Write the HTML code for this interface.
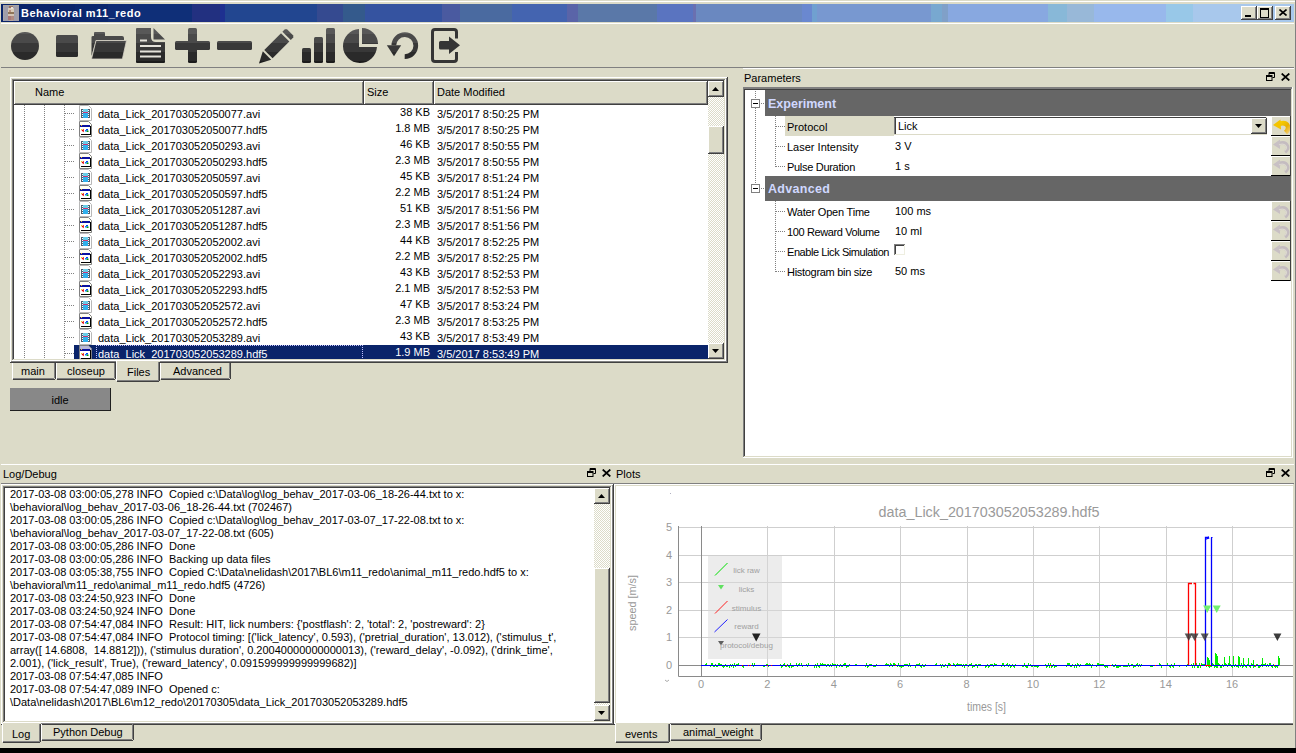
<!DOCTYPE html>
<html><head><meta charset="utf-8"><style>
html,body{margin:0;padding:0;}
body{width:1296px;height:753px;overflow:hidden;position:relative;background:#dcdbc8;font-family:"Liberation Sans",sans-serif;font-size:11px;}
body div, body svg{position:absolute;}
.t{white-space:pre;line-height:13px;color:#000;}
svg *{position:static}
</style></head><body>
<div style="left:0px;top:1px;width:1295px;height:1px;background:#fff;"></div><div style="left:1295px;top:0px;width:1px;height:748px;background:#808080;"></div><div style="left:0px;top:748px;width:1296px;height:5px;background:#000;"></div><div style="left:1px;top:4px;width:1293px;height:18px;background:linear-gradient(90deg,#0a246a 0px 74px,#0b276e 74px 107px,#0e2b75 107px 139px,#0f2f78 139px 191px,#223080 191px 219px,#1e3090 219px 224px,#224690 224px 316px,#354a90 316px 342px,#345a8c 342px 364px,#3553a0 364px 441px,#4a5aa0 441px 459px,#4a6aa0 459px 511px,#4464b0 511px 566px,#5a64a8 566px 577px,#5a78a8 577px 656px,#5a74c0 656px 692px,#6a70b0 692px 695px,#6a88c0 695px 801px,#6a88d0 801px 811px,#70a0d0 811px 816px,#7898d0 816px 930px,#78a8d0 930px 941px,#80a0c8 941px 947px,#88a8e0 947px 1047px,#88b8d8 1047px 1066px,#98b8d8 1066px 1093px,#98b8ec 1093px 1165px,#98c8e8 1165px 1192px,#a8c8ec 1192px 1293px);"></div><svg style="left:3px;top:5px" width="16" height="16" viewBox="0 0 16 16" shape-rendering="crispEdges"><rect width="16" height="16" fill="#a09eaa"/><rect x="0" y="0" width="16" height="1" fill="#aaa69e"/><rect x="0" y="0" width="1" height="16" fill="#a8a6a8"/><rect x="6" y="1" width="4" height="2" fill="#9a7060"/><rect x="5" y="3" width="6" height="5" fill="#d8cbb8"/><rect x="8" y="2" width="2" height="2" fill="#ece4d8"/><rect x="6" y="5" width="2" height="2" fill="#b89080"/><rect x="5" y="7" width="6" height="2" fill="#8e7458"/><rect x="5" y="9" width="6" height="2" fill="#d4c4b4"/><rect x="5" y="11" width="3" height="4" fill="#a87878"/><rect x="8" y="11" width="3" height="4" fill="#b08a80"/><rect x="6" y="15" width="4" height="1" fill="#b8a8a0"/></svg><div class="t" style="left:21px;top:7px;color:#fff;font-weight:bold;letter-spacing:0.5px">Behavioral m11_redo</div><div style="left:1241px;top:6px;width:16px;height:14px;background:#404040;"></div><div style="left:1241px;top:6px;width:15px;height:13px;background:#fff;"></div><div style="left:1242px;top:7px;width:14px;height:12px;background:#808080;"></div><div style="left:1242px;top:7px;width:13px;height:11px;background:#dcdbc8;"></div><div style="left:1245px;top:15px;width:6px;height:2px;background:#000;"></div><div style="left:1257px;top:6px;width:16px;height:14px;background:#404040;"></div><div style="left:1257px;top:6px;width:15px;height:13px;background:#fff;"></div><div style="left:1258px;top:7px;width:14px;height:12px;background:#808080;"></div><div style="left:1258px;top:7px;width:13px;height:11px;background:#dcdbc8;"></div><div style="left:1260px;top:8px;width:7px;height:7px;border:1px solid #000;border-top-width:2px"></div><div style="left:1275px;top:6px;width:16px;height:14px;background:#404040;"></div><div style="left:1275px;top:6px;width:15px;height:13px;background:#fff;"></div><div style="left:1276px;top:7px;width:14px;height:12px;background:#808080;"></div><div style="left:1276px;top:7px;width:13px;height:11px;background:#dcdbc8;"></div><svg style="left:1279px;top:9px" width="8" height="7" viewBox="0 0 8 7"><path d="M0.5 0.5 L7.5 6.5 M7.5 0.5 L0.5 6.5" stroke="#000" stroke-width="1.6"/></svg><div style="left:1px;top:23px;width:1293px;height:1px;background:#fff;"></div><div style="left:1px;top:67px;width:1293px;height:1px;background:#808080;"></div><div style="left:743px;top:68px;width:551px;height:1px;background:#fff;"></div><svg style="left:0px;top:0px" width="470" height="67" viewBox="0 0 470 67">
<defs><linearGradient id="tg" gradientUnits="userSpaceOnUse" x1="0" y1="27" x2="0" y2="64">
<stop offset="0" stop-color="#585858"/><stop offset="0.19" stop-color="#585858"/>
<stop offset="0.19" stop-color="#4a4a4a"/><stop offset="0.43" stop-color="#4a4a4a"/>
<stop offset="0.43" stop-color="#383838"/><stop offset="0.68" stop-color="#383838"/>
<stop offset="0.68" stop-color="#2a2a2a"/><stop offset="0.92" stop-color="#2a2a2a"/>
<stop offset="0.92" stop-color="#1c1c1c"/><stop offset="1" stop-color="#1c1c1c"/>
</linearGradient></defs>
<circle cx="25" cy="46" r="14" fill="url(#tg)"/>
<rect x="56" y="35" width="22" height="22" rx="1.5" fill="url(#tg)"/>
<path d="M95 32 H104 Q105 32 105 33 V36 H122 Q124 36 124 38 V40 H96 L91.5 56 V37 Q91.5 36 93 36 H94 V33 Q94 32 95 32 Z" fill="url(#tg)"/>
<path d="M96 40.5 H126.5 L122.5 58.5 Q122 59 121 59 H91.5 Z" fill="url(#tg)" stroke="#d8d4c8" stroke-width="0.8"/>
<path d="M137 28 H151 V37 Q151 42 156 42 H165 V62 Q165 63 164 63 H137 Q136 63 136 62 V29 Q136 28 137 28 Z" fill="url(#tg)"/>
<path d="M153.5 28 L165 39.5 H153.5 Z" fill="url(#tg)"/>
<rect x="140" y="39.5" width="7" height="2" fill="#e4e2da"/>
<rect x="140" y="45" width="21" height="2" fill="#e4e2da"/>
<rect x="140" y="50.5" width="21" height="2" fill="#e4e2da"/>
<rect x="140" y="55.5" width="21" height="2" fill="#e4e2da"/>
<rect x="175" y="41" width="35" height="9" rx="1.5" fill="url(#tg)"/>
<rect x="188" y="28" width="9" height="35" rx="1.5" fill="url(#tg)"/>
<rect x="217" y="41" width="35" height="9" rx="1.5" fill="url(#tg)"/>
<path d="M259.00 63.50 L262.82 51.34 L271.16 59.68 Z" fill="url(#tg)"/>
<path d="M264.23 49.92 L280.99 33.17 L289.33 41.51 L272.58 58.27 Z" fill="url(#tg)"/>
<path d="M282.41 31.75 L284.88 29.28 L287.00 29.28 L293.22 35.50 L293.22 37.62 L290.75 40.09 Z" fill="url(#tg)"/>
<rect x="302" y="48" width="9" height="15" rx="1.5" fill="url(#tg)"/>
<rect x="314" y="37" width="9" height="26" rx="1.5" fill="url(#tg)"/>
<rect x="326" y="28" width="9" height="35" rx="1.5" fill="url(#tg)"/>
<path d="M359 47 V29.03 A17 17 0 1 0 376.97 47 Z" fill="url(#tg)"/>
<path d="M362 44 V28 A16 16 0 0 1 378 44 Z" fill="url(#tg)"/>
<path d="M393.8 45.4 A11 11 0 1 1 404.7 56.6" fill="none" stroke="url(#tg)" stroke-width="4.7"/>
<path d="M386.8 45.3 H401.2 L394 56.2 Z" fill="url(#tg)"/>
<path d="M456.5 38.5 V32 Q456.5 29.5 454 29.5 H435 Q432.5 29.5 432.5 32 V59 Q432.5 61.5 435 61.5 H454 Q456.5 61.5 456.5 59 V52" fill="none" stroke="#353535" stroke-width="3"/>
<path d="M440.5 41 H449 V36.6 L460 45.3 L449 54 V49.5 H440.5 Q439 49.5 439 48 V42.5 Q439 41 440.5 41 Z" fill="#353535"/>
</svg><div style="left:10px;top:77px;width:718px;height:286px;background:#404040;"></div><div style="left:10px;top:77px;width:717px;height:285px;background:#fff;"></div><div style="left:11px;top:78px;width:716px;height:284px;background:#808080;"></div><div style="left:11px;top:78px;width:715px;height:283px;background:#dcdbc8;"></div><div style="left:12px;top:79px;width:714px;height:282px;background:#fff;"></div><div style="left:12px;top:79px;width:713px;height:281px;background:#808080;"></div><div style="left:13px;top:80px;width:712px;height:280px;background:#dcdbc8;"></div><div style="left:13px;top:80px;width:711px;height:279px;background:#404040;"></div><div style="left:14px;top:81px;width:710px;height:278px;background:#fff;"></div><div style="left:14px;top:81px;width:350px;height:24px;background:#404040;"></div><div style="left:14px;top:81px;width:349px;height:23px;background:#fff;"></div><div style="left:15px;top:82px;width:348px;height:22px;background:#808080;"></div><div style="left:15px;top:82px;width:347px;height:21px;background:#dcdbc8;"></div><div class="t" style="left:35px;top:86px;">Name</div><div style="left:364px;top:81px;width:70px;height:24px;background:#404040;"></div><div style="left:364px;top:81px;width:69px;height:23px;background:#fff;"></div><div style="left:365px;top:82px;width:68px;height:22px;background:#808080;"></div><div style="left:365px;top:82px;width:67px;height:21px;background:#dcdbc8;"></div><div class="t" style="left:367px;top:86px;">Size</div><div style="left:434px;top:81px;width:274px;height:24px;background:#404040;"></div><div style="left:434px;top:81px;width:273px;height:23px;background:#fff;"></div><div style="left:435px;top:82px;width:272px;height:22px;background:#808080;"></div><div style="left:435px;top:82px;width:271px;height:21px;background:#dcdbc8;"></div><div class="t" style="left:437px;top:86px;">Date Modified</div><div style="left:14px;top:105px;width:694px;height:254px;overflow:hidden"><div style="left:10px;top:0px;width:1px;height:254px;background:repeating-linear-gradient(180deg,#808080 0 1px,transparent 1px 2px)"></div><div style="left:30px;top:0px;width:1px;height:254px;background:repeating-linear-gradient(180deg,#808080 0 1px,transparent 1px 2px)"></div><div style="left:50px;top:0px;width:1px;height:254px;background:repeating-linear-gradient(180deg,#808080 0 1px,transparent 1px 2px)"></div><div style="left:51px;top:8px;width:10px;height:1px;background:repeating-linear-gradient(90deg,#808080 0 1px,transparent 1px 2px)"></div><svg style="left:65px;top:0px" width="14" height="16" viewBox="0 0 14 16"><path d="M0.5 0.5 H9.5 L12.5 3.5 V15.5 H0.5 Z" fill="#fff" stroke="#b8b8b8"/><rect x="2" y="4" width="9" height="9" fill="#4c5c6c"/><rect x="4" y="4" width="5" height="9" fill="#30b0ec"/><rect x="4" y="4" width="5" height="3" fill="#68cce8"/><rect x="4" y="7" width="5" height="1" fill="#c83878"/><rect x="3" y="5" width="1" height="1" fill="#fff"/><rect x="3" y="7" width="1" height="1" fill="#fff"/><rect x="3" y="9" width="1" height="1" fill="#fff"/><rect x="3" y="11" width="1" height="1" fill="#fff"/><rect x="9" y="5" width="1" height="1" fill="#fff"/><rect x="9" y="7" width="1" height="1" fill="#fff"/><rect x="9" y="9" width="1" height="1" fill="#fff"/><rect x="9" y="11" width="1" height="1" fill="#fff"/></svg><div class="t" style="left:84px;top:3px;color:#000">data_Lick_201703052050077.avi</div><div class="t" style="left:350px;top:1px;width:66px;text-align:right;color:#000">38 KB</div><div class="t" style="left:423px;top:3px;color:#000">3/5/2017 8:50:25 PM</div><div style="left:51px;top:24px;width:10px;height:1px;background:repeating-linear-gradient(90deg,#808080 0 1px,transparent 1px 2px)"></div><svg style="left:65px;top:16px" width="14" height="16" viewBox="0 0 14 16"><path d="M0.5 0.5 H9.5 L12.5 3.5 V15.5 H0.5 Z" fill="#fffff4" stroke="#808080"/><rect x="2" y="5" width="10" height="9" fill="#000"/><rect x="1" y="4" width="10" height="9" fill="#fff"/><rect x="1" y="4" width="10" height="2" fill="#0a10a0"/><rect x="2" y="4" width="1" height="1" fill="#f0c020"/><path d="M2.5 9.5 L4.8 7.8 V11.2 Z" fill="#e00000"/><rect x="2" y="8" width="1" height="1" fill="#f0e000"/><rect x="7" y="8" width="2" height="1.5" fill="#0040ff"/><rect x="7.5" y="9.5" width="2" height="1.5" fill="#00a000"/><rect x="6" y="9" width="1.5" height="1.5" fill="#0080ff"/></svg><div class="t" style="left:84px;top:19px;color:#000">data_Lick_201703052050077.hdf5</div><div class="t" style="left:350px;top:17px;width:66px;text-align:right;color:#000">1.8 MB</div><div class="t" style="left:423px;top:19px;color:#000">3/5/2017 8:50:25 PM</div><div style="left:51px;top:40px;width:10px;height:1px;background:repeating-linear-gradient(90deg,#808080 0 1px,transparent 1px 2px)"></div><svg style="left:65px;top:32px" width="14" height="16" viewBox="0 0 14 16"><path d="M0.5 0.5 H9.5 L12.5 3.5 V15.5 H0.5 Z" fill="#fff" stroke="#b8b8b8"/><rect x="2" y="4" width="9" height="9" fill="#4c5c6c"/><rect x="4" y="4" width="5" height="9" fill="#30b0ec"/><rect x="4" y="4" width="5" height="3" fill="#68cce8"/><rect x="4" y="7" width="5" height="1" fill="#c83878"/><rect x="3" y="5" width="1" height="1" fill="#fff"/><rect x="3" y="7" width="1" height="1" fill="#fff"/><rect x="3" y="9" width="1" height="1" fill="#fff"/><rect x="3" y="11" width="1" height="1" fill="#fff"/><rect x="9" y="5" width="1" height="1" fill="#fff"/><rect x="9" y="7" width="1" height="1" fill="#fff"/><rect x="9" y="9" width="1" height="1" fill="#fff"/><rect x="9" y="11" width="1" height="1" fill="#fff"/></svg><div class="t" style="left:84px;top:35px;color:#000">data_Lick_201703052050293.avi</div><div class="t" style="left:350px;top:33px;width:66px;text-align:right;color:#000">46 KB</div><div class="t" style="left:423px;top:35px;color:#000">3/5/2017 8:50:55 PM</div><div style="left:51px;top:56px;width:10px;height:1px;background:repeating-linear-gradient(90deg,#808080 0 1px,transparent 1px 2px)"></div><svg style="left:65px;top:48px" width="14" height="16" viewBox="0 0 14 16"><path d="M0.5 0.5 H9.5 L12.5 3.5 V15.5 H0.5 Z" fill="#fffff4" stroke="#808080"/><rect x="2" y="5" width="10" height="9" fill="#000"/><rect x="1" y="4" width="10" height="9" fill="#fff"/><rect x="1" y="4" width="10" height="2" fill="#0a10a0"/><rect x="2" y="4" width="1" height="1" fill="#f0c020"/><path d="M2.5 9.5 L4.8 7.8 V11.2 Z" fill="#e00000"/><rect x="2" y="8" width="1" height="1" fill="#f0e000"/><rect x="7" y="8" width="2" height="1.5" fill="#0040ff"/><rect x="7.5" y="9.5" width="2" height="1.5" fill="#00a000"/><rect x="6" y="9" width="1.5" height="1.5" fill="#0080ff"/></svg><div class="t" style="left:84px;top:51px;color:#000">data_Lick_201703052050293.hdf5</div><div class="t" style="left:350px;top:49px;width:66px;text-align:right;color:#000">2.3 MB</div><div class="t" style="left:423px;top:51px;color:#000">3/5/2017 8:50:55 PM</div><div style="left:51px;top:72px;width:10px;height:1px;background:repeating-linear-gradient(90deg,#808080 0 1px,transparent 1px 2px)"></div><svg style="left:65px;top:64px" width="14" height="16" viewBox="0 0 14 16"><path d="M0.5 0.5 H9.5 L12.5 3.5 V15.5 H0.5 Z" fill="#fff" stroke="#b8b8b8"/><rect x="2" y="4" width="9" height="9" fill="#4c5c6c"/><rect x="4" y="4" width="5" height="9" fill="#30b0ec"/><rect x="4" y="4" width="5" height="3" fill="#68cce8"/><rect x="4" y="7" width="5" height="1" fill="#c83878"/><rect x="3" y="5" width="1" height="1" fill="#fff"/><rect x="3" y="7" width="1" height="1" fill="#fff"/><rect x="3" y="9" width="1" height="1" fill="#fff"/><rect x="3" y="11" width="1" height="1" fill="#fff"/><rect x="9" y="5" width="1" height="1" fill="#fff"/><rect x="9" y="7" width="1" height="1" fill="#fff"/><rect x="9" y="9" width="1" height="1" fill="#fff"/><rect x="9" y="11" width="1" height="1" fill="#fff"/></svg><div class="t" style="left:84px;top:67px;color:#000">data_Lick_201703052050597.avi</div><div class="t" style="left:350px;top:65px;width:66px;text-align:right;color:#000">45 KB</div><div class="t" style="left:423px;top:67px;color:#000">3/5/2017 8:51:24 PM</div><div style="left:51px;top:88px;width:10px;height:1px;background:repeating-linear-gradient(90deg,#808080 0 1px,transparent 1px 2px)"></div><svg style="left:65px;top:80px" width="14" height="16" viewBox="0 0 14 16"><path d="M0.5 0.5 H9.5 L12.5 3.5 V15.5 H0.5 Z" fill="#fffff4" stroke="#808080"/><rect x="2" y="5" width="10" height="9" fill="#000"/><rect x="1" y="4" width="10" height="9" fill="#fff"/><rect x="1" y="4" width="10" height="2" fill="#0a10a0"/><rect x="2" y="4" width="1" height="1" fill="#f0c020"/><path d="M2.5 9.5 L4.8 7.8 V11.2 Z" fill="#e00000"/><rect x="2" y="8" width="1" height="1" fill="#f0e000"/><rect x="7" y="8" width="2" height="1.5" fill="#0040ff"/><rect x="7.5" y="9.5" width="2" height="1.5" fill="#00a000"/><rect x="6" y="9" width="1.5" height="1.5" fill="#0080ff"/></svg><div class="t" style="left:84px;top:83px;color:#000">data_Lick_201703052050597.hdf5</div><div class="t" style="left:350px;top:81px;width:66px;text-align:right;color:#000">2.2 MB</div><div class="t" style="left:423px;top:83px;color:#000">3/5/2017 8:51:24 PM</div><div style="left:51px;top:104px;width:10px;height:1px;background:repeating-linear-gradient(90deg,#808080 0 1px,transparent 1px 2px)"></div><svg style="left:65px;top:96px" width="14" height="16" viewBox="0 0 14 16"><path d="M0.5 0.5 H9.5 L12.5 3.5 V15.5 H0.5 Z" fill="#fff" stroke="#b8b8b8"/><rect x="2" y="4" width="9" height="9" fill="#4c5c6c"/><rect x="4" y="4" width="5" height="9" fill="#30b0ec"/><rect x="4" y="4" width="5" height="3" fill="#68cce8"/><rect x="4" y="7" width="5" height="1" fill="#c83878"/><rect x="3" y="5" width="1" height="1" fill="#fff"/><rect x="3" y="7" width="1" height="1" fill="#fff"/><rect x="3" y="9" width="1" height="1" fill="#fff"/><rect x="3" y="11" width="1" height="1" fill="#fff"/><rect x="9" y="5" width="1" height="1" fill="#fff"/><rect x="9" y="7" width="1" height="1" fill="#fff"/><rect x="9" y="9" width="1" height="1" fill="#fff"/><rect x="9" y="11" width="1" height="1" fill="#fff"/></svg><div class="t" style="left:84px;top:99px;color:#000">data_Lick_201703052051287.avi</div><div class="t" style="left:350px;top:97px;width:66px;text-align:right;color:#000">51 KB</div><div class="t" style="left:423px;top:99px;color:#000">3/5/2017 8:51:56 PM</div><div style="left:51px;top:120px;width:10px;height:1px;background:repeating-linear-gradient(90deg,#808080 0 1px,transparent 1px 2px)"></div><svg style="left:65px;top:112px" width="14" height="16" viewBox="0 0 14 16"><path d="M0.5 0.5 H9.5 L12.5 3.5 V15.5 H0.5 Z" fill="#fffff4" stroke="#808080"/><rect x="2" y="5" width="10" height="9" fill="#000"/><rect x="1" y="4" width="10" height="9" fill="#fff"/><rect x="1" y="4" width="10" height="2" fill="#0a10a0"/><rect x="2" y="4" width="1" height="1" fill="#f0c020"/><path d="M2.5 9.5 L4.8 7.8 V11.2 Z" fill="#e00000"/><rect x="2" y="8" width="1" height="1" fill="#f0e000"/><rect x="7" y="8" width="2" height="1.5" fill="#0040ff"/><rect x="7.5" y="9.5" width="2" height="1.5" fill="#00a000"/><rect x="6" y="9" width="1.5" height="1.5" fill="#0080ff"/></svg><div class="t" style="left:84px;top:115px;color:#000">data_Lick_201703052051287.hdf5</div><div class="t" style="left:350px;top:113px;width:66px;text-align:right;color:#000">2.3 MB</div><div class="t" style="left:423px;top:115px;color:#000">3/5/2017 8:51:56 PM</div><div style="left:51px;top:136px;width:10px;height:1px;background:repeating-linear-gradient(90deg,#808080 0 1px,transparent 1px 2px)"></div><svg style="left:65px;top:128px" width="14" height="16" viewBox="0 0 14 16"><path d="M0.5 0.5 H9.5 L12.5 3.5 V15.5 H0.5 Z" fill="#fff" stroke="#b8b8b8"/><rect x="2" y="4" width="9" height="9" fill="#4c5c6c"/><rect x="4" y="4" width="5" height="9" fill="#30b0ec"/><rect x="4" y="4" width="5" height="3" fill="#68cce8"/><rect x="4" y="7" width="5" height="1" fill="#c83878"/><rect x="3" y="5" width="1" height="1" fill="#fff"/><rect x="3" y="7" width="1" height="1" fill="#fff"/><rect x="3" y="9" width="1" height="1" fill="#fff"/><rect x="3" y="11" width="1" height="1" fill="#fff"/><rect x="9" y="5" width="1" height="1" fill="#fff"/><rect x="9" y="7" width="1" height="1" fill="#fff"/><rect x="9" y="9" width="1" height="1" fill="#fff"/><rect x="9" y="11" width="1" height="1" fill="#fff"/></svg><div class="t" style="left:84px;top:131px;color:#000">data_Lick_201703052052002.avi</div><div class="t" style="left:350px;top:129px;width:66px;text-align:right;color:#000">44 KB</div><div class="t" style="left:423px;top:131px;color:#000">3/5/2017 8:52:25 PM</div><div style="left:51px;top:152px;width:10px;height:1px;background:repeating-linear-gradient(90deg,#808080 0 1px,transparent 1px 2px)"></div><svg style="left:65px;top:144px" width="14" height="16" viewBox="0 0 14 16"><path d="M0.5 0.5 H9.5 L12.5 3.5 V15.5 H0.5 Z" fill="#fffff4" stroke="#808080"/><rect x="2" y="5" width="10" height="9" fill="#000"/><rect x="1" y="4" width="10" height="9" fill="#fff"/><rect x="1" y="4" width="10" height="2" fill="#0a10a0"/><rect x="2" y="4" width="1" height="1" fill="#f0c020"/><path d="M2.5 9.5 L4.8 7.8 V11.2 Z" fill="#e00000"/><rect x="2" y="8" width="1" height="1" fill="#f0e000"/><rect x="7" y="8" width="2" height="1.5" fill="#0040ff"/><rect x="7.5" y="9.5" width="2" height="1.5" fill="#00a000"/><rect x="6" y="9" width="1.5" height="1.5" fill="#0080ff"/></svg><div class="t" style="left:84px;top:147px;color:#000">data_Lick_201703052052002.hdf5</div><div class="t" style="left:350px;top:145px;width:66px;text-align:right;color:#000">2.2 MB</div><div class="t" style="left:423px;top:147px;color:#000">3/5/2017 8:52:25 PM</div><div style="left:51px;top:168px;width:10px;height:1px;background:repeating-linear-gradient(90deg,#808080 0 1px,transparent 1px 2px)"></div><svg style="left:65px;top:160px" width="14" height="16" viewBox="0 0 14 16"><path d="M0.5 0.5 H9.5 L12.5 3.5 V15.5 H0.5 Z" fill="#fff" stroke="#b8b8b8"/><rect x="2" y="4" width="9" height="9" fill="#4c5c6c"/><rect x="4" y="4" width="5" height="9" fill="#30b0ec"/><rect x="4" y="4" width="5" height="3" fill="#68cce8"/><rect x="4" y="7" width="5" height="1" fill="#c83878"/><rect x="3" y="5" width="1" height="1" fill="#fff"/><rect x="3" y="7" width="1" height="1" fill="#fff"/><rect x="3" y="9" width="1" height="1" fill="#fff"/><rect x="3" y="11" width="1" height="1" fill="#fff"/><rect x="9" y="5" width="1" height="1" fill="#fff"/><rect x="9" y="7" width="1" height="1" fill="#fff"/><rect x="9" y="9" width="1" height="1" fill="#fff"/><rect x="9" y="11" width="1" height="1" fill="#fff"/></svg><div class="t" style="left:84px;top:163px;color:#000">data_Lick_201703052052293.avi</div><div class="t" style="left:350px;top:161px;width:66px;text-align:right;color:#000">43 KB</div><div class="t" style="left:423px;top:163px;color:#000">3/5/2017 8:52:53 PM</div><div style="left:51px;top:184px;width:10px;height:1px;background:repeating-linear-gradient(90deg,#808080 0 1px,transparent 1px 2px)"></div><svg style="left:65px;top:176px" width="14" height="16" viewBox="0 0 14 16"><path d="M0.5 0.5 H9.5 L12.5 3.5 V15.5 H0.5 Z" fill="#fffff4" stroke="#808080"/><rect x="2" y="5" width="10" height="9" fill="#000"/><rect x="1" y="4" width="10" height="9" fill="#fff"/><rect x="1" y="4" width="10" height="2" fill="#0a10a0"/><rect x="2" y="4" width="1" height="1" fill="#f0c020"/><path d="M2.5 9.5 L4.8 7.8 V11.2 Z" fill="#e00000"/><rect x="2" y="8" width="1" height="1" fill="#f0e000"/><rect x="7" y="8" width="2" height="1.5" fill="#0040ff"/><rect x="7.5" y="9.5" width="2" height="1.5" fill="#00a000"/><rect x="6" y="9" width="1.5" height="1.5" fill="#0080ff"/></svg><div class="t" style="left:84px;top:179px;color:#000">data_Lick_201703052052293.hdf5</div><div class="t" style="left:350px;top:177px;width:66px;text-align:right;color:#000">2.1 MB</div><div class="t" style="left:423px;top:179px;color:#000">3/5/2017 8:52:53 PM</div><div style="left:51px;top:200px;width:10px;height:1px;background:repeating-linear-gradient(90deg,#808080 0 1px,transparent 1px 2px)"></div><svg style="left:65px;top:192px" width="14" height="16" viewBox="0 0 14 16"><path d="M0.5 0.5 H9.5 L12.5 3.5 V15.5 H0.5 Z" fill="#fff" stroke="#b8b8b8"/><rect x="2" y="4" width="9" height="9" fill="#4c5c6c"/><rect x="4" y="4" width="5" height="9" fill="#30b0ec"/><rect x="4" y="4" width="5" height="3" fill="#68cce8"/><rect x="4" y="7" width="5" height="1" fill="#c83878"/><rect x="3" y="5" width="1" height="1" fill="#fff"/><rect x="3" y="7" width="1" height="1" fill="#fff"/><rect x="3" y="9" width="1" height="1" fill="#fff"/><rect x="3" y="11" width="1" height="1" fill="#fff"/><rect x="9" y="5" width="1" height="1" fill="#fff"/><rect x="9" y="7" width="1" height="1" fill="#fff"/><rect x="9" y="9" width="1" height="1" fill="#fff"/><rect x="9" y="11" width="1" height="1" fill="#fff"/></svg><div class="t" style="left:84px;top:195px;color:#000">data_Lick_201703052052572.avi</div><div class="t" style="left:350px;top:193px;width:66px;text-align:right;color:#000">47 KB</div><div class="t" style="left:423px;top:195px;color:#000">3/5/2017 8:53:24 PM</div><div style="left:51px;top:216px;width:10px;height:1px;background:repeating-linear-gradient(90deg,#808080 0 1px,transparent 1px 2px)"></div><svg style="left:65px;top:208px" width="14" height="16" viewBox="0 0 14 16"><path d="M0.5 0.5 H9.5 L12.5 3.5 V15.5 H0.5 Z" fill="#fffff4" stroke="#808080"/><rect x="2" y="5" width="10" height="9" fill="#000"/><rect x="1" y="4" width="10" height="9" fill="#fff"/><rect x="1" y="4" width="10" height="2" fill="#0a10a0"/><rect x="2" y="4" width="1" height="1" fill="#f0c020"/><path d="M2.5 9.5 L4.8 7.8 V11.2 Z" fill="#e00000"/><rect x="2" y="8" width="1" height="1" fill="#f0e000"/><rect x="7" y="8" width="2" height="1.5" fill="#0040ff"/><rect x="7.5" y="9.5" width="2" height="1.5" fill="#00a000"/><rect x="6" y="9" width="1.5" height="1.5" fill="#0080ff"/></svg><div class="t" style="left:84px;top:211px;color:#000">data_Lick_201703052052572.hdf5</div><div class="t" style="left:350px;top:209px;width:66px;text-align:right;color:#000">2.3 MB</div><div class="t" style="left:423px;top:211px;color:#000">3/5/2017 8:53:25 PM</div><div style="left:51px;top:232px;width:10px;height:1px;background:repeating-linear-gradient(90deg,#808080 0 1px,transparent 1px 2px)"></div><svg style="left:65px;top:224px" width="14" height="16" viewBox="0 0 14 16"><path d="M0.5 0.5 H9.5 L12.5 3.5 V15.5 H0.5 Z" fill="#fff" stroke="#b8b8b8"/><rect x="2" y="4" width="9" height="9" fill="#4c5c6c"/><rect x="4" y="4" width="5" height="9" fill="#30b0ec"/><rect x="4" y="4" width="5" height="3" fill="#68cce8"/><rect x="4" y="7" width="5" height="1" fill="#c83878"/><rect x="3" y="5" width="1" height="1" fill="#fff"/><rect x="3" y="7" width="1" height="1" fill="#fff"/><rect x="3" y="9" width="1" height="1" fill="#fff"/><rect x="3" y="11" width="1" height="1" fill="#fff"/><rect x="9" y="5" width="1" height="1" fill="#fff"/><rect x="9" y="7" width="1" height="1" fill="#fff"/><rect x="9" y="9" width="1" height="1" fill="#fff"/><rect x="9" y="11" width="1" height="1" fill="#fff"/></svg><div class="t" style="left:84px;top:227px;color:#000">data_Lick_201703052053289.avi</div><div class="t" style="left:350px;top:225px;width:66px;text-align:right;color:#000">43 KB</div><div class="t" style="left:423px;top:227px;color:#000">3/5/2017 8:53:49 PM</div><div style="left:60px;top:240px;width:634px;height:16px;background:#0a246a"></div><div style="left:51px;top:248px;width:10px;height:1px;background:repeating-linear-gradient(90deg,#808080 0 1px,transparent 1px 2px)"></div><svg style="left:65px;top:240px" width="14" height="16" viewBox="0 0 14 16"><path d="M0.5 0.5 H9.5 L12.5 3.5 V15.5 H0.5 Z" fill="#b8b8d8" stroke="#808080"/><rect x="2" y="5" width="10" height="9" fill="#000"/><rect x="1" y="4" width="10" height="9" fill="#fff"/><rect x="1" y="4" width="10" height="2" fill="#0a10a0"/><rect x="2" y="4" width="1" height="1" fill="#f0c020"/><path d="M2.5 9.5 L4.8 7.8 V11.2 Z" fill="#e00000"/><rect x="2" y="8" width="1" height="1" fill="#f0e000"/><rect x="7" y="8" width="2" height="1.5" fill="#0040ff"/><rect x="7.5" y="9.5" width="2" height="1.5" fill="#00a000"/><rect x="6" y="9" width="1.5" height="1.5" fill="#0080ff"/></svg><div class="t" style="left:84px;top:243px;color:#fff">data_Lick_201703052053289.hdf5</div><div class="t" style="left:350px;top:241px;width:66px;text-align:right;color:#fff">1.9 MB</div><div class="t" style="left:423px;top:243px;color:#fff">3/5/2017 8:53:49 PM</div><div style="left:82px;top:240px;width:267px;height:15px;box-sizing:border-box;border:1px dotted #c0c0ff;border-bottom:none"></div></div><div style="left:708px;top:81px;width:16px;height:278px;background:repeating-conic-gradient(#fff 0 25%,#dcdbc8 0 50%) 0 0/2px 2px"></div><div style="left:708px;top:81px;width:16px;height:16px;background:#404040;"></div><div style="left:708px;top:81px;width:15px;height:15px;background:#fff;"></div><div style="left:709px;top:82px;width:14px;height:14px;background:#808080;"></div><div style="left:709px;top:82px;width:13px;height:13px;background:#dcdbc8;"></div><svg style="left:712px;top:87px" width="7" height="4" viewBox="0 0 7 4"><path d="M3.5 0 L7 4 H0 Z" fill="#000"/></svg><div style="left:708px;top:343px;width:16px;height:16px;background:#404040;"></div><div style="left:708px;top:343px;width:15px;height:15px;background:#fff;"></div><div style="left:709px;top:344px;width:14px;height:14px;background:#808080;"></div><div style="left:709px;top:344px;width:13px;height:13px;background:#dcdbc8;"></div><svg style="left:712px;top:349px" width="7" height="4" viewBox="0 0 7 4"><path d="M0 0 H7 L3.5 4 Z" fill="#000"/></svg><div style="left:708px;top:126px;width:16px;height:28px;background:#404040;"></div><div style="left:708px;top:126px;width:15px;height:27px;background:#fff;"></div><div style="left:709px;top:127px;width:14px;height:26px;background:#808080;"></div><div style="left:709px;top:127px;width:13px;height:25px;background:#dcdbc8;"></div><div style="left:12px;top:363px;width:1px;height:16px;background:#fff;"></div><div style="left:55px;top:363px;width:1px;height:16px;background:#404040;"></div><div style="left:54px;top:363px;width:1px;height:15px;background:#808080;"></div><div style="left:13px;top:379px;width:42px;height:1px;background:#404040;"></div><div style="left:13px;top:378px;width:41px;height:1px;background:#808080;"></div><div class="t" style="left:21px;top:365px;">main</div><div style="left:56px;top:363px;width:1px;height:16px;background:#fff;"></div><div style="left:115px;top:363px;width:1px;height:16px;background:#404040;"></div><div style="left:114px;top:363px;width:1px;height:15px;background:#808080;"></div><div style="left:57px;top:379px;width:58px;height:1px;background:#404040;"></div><div style="left:57px;top:378px;width:57px;height:1px;background:#808080;"></div><div class="t" style="left:67px;top:365px;">closeup</div><div style="left:160px;top:363px;width:1px;height:16px;background:#fff;"></div><div style="left:230px;top:363px;width:1px;height:16px;background:#404040;"></div><div style="left:229px;top:363px;width:1px;height:15px;background:#808080;"></div><div style="left:161px;top:379px;width:69px;height:1px;background:#404040;"></div><div style="left:161px;top:378px;width:68px;height:1px;background:#808080;"></div><div class="t" style="left:173px;top:365px;">Advanced</div><div style="left:116px;top:361px;width:44px;height:21px;background:#dcdbc8;"></div><div style="left:116px;top:361px;width:1px;height:20px;background:#fff;"></div><div style="left:159px;top:362px;width:1px;height:19px;background:#404040;"></div><div style="left:158px;top:362px;width:1px;height:19px;background:#808080;"></div><div style="left:117px;top:381px;width:42px;height:1px;background:#404040;"></div><div style="left:117px;top:380px;width:41px;height:1px;background:#808080;"></div><div class="t" style="left:127px;top:366px;">Files</div><div style="left:10px;top:388px;width:101px;height:23px;background:#202020;"></div><div style="left:10px;top:388px;width:100px;height:22px;background:#888888;"></div><div class="t" style="left:10px;top:394px;width:100px;text-align:center">idle</div><div class="t" style="left:744px;top:72px;">Parameters</div><svg style="left:1266px;top:72px" width="9" height="9" viewBox="0 0 9 9"><path d="M3 0.5 H8.5 V5.5 H6.5 M3 0.5 V3" fill="none" stroke="#000"/><path d="M3 1.5 H8" stroke="#000" stroke-width="1"/><rect x="0.5" y="3.5" width="5.5" height="5" fill="none" stroke="#000"/><path d="M1 4.5 H6" stroke="#000"/></svg><svg style="left:1281px;top:73px" width="9" height="8" viewBox="0 0 9 8"><path d="M0.7 0.5 L8.3 7.5 M8.3 0.5 L0.7 7.5" stroke="#000" stroke-width="1.7"/></svg><div style="left:743px;top:87px;width:550px;height:371px;background:#fff;"></div><div style="left:743px;top:87px;width:549px;height:370px;background:#808080;"></div><div style="left:744px;top:88px;width:548px;height:369px;background:#dcdbc8;"></div><div style="left:744px;top:88px;width:547px;height:368px;background:#404040;"></div><div style="left:744px;top:88px;width:548px;height:1px;background:#808080;"></div><div style="left:745px;top:89px;width:546px;height:1px;background:#404040;"></div><div style="left:745px;top:90px;width:546px;height:366px;background:#fff;"></div><div style="left:755px;top:91px;width:1px;height:8px;background:repeating-linear-gradient(180deg,#808080 0 1px,transparent 1px 2px)"></div>
<div style="left:755px;top:108px;width:1px;height:76px;background:repeating-linear-gradient(180deg,#808080 0 1px,transparent 1px 2px)"></div>
<div style="left:751px;top:99px;width:7px;height:7px;border:1px solid #808080;background:#fff"></div>
<div style="left:753px;top:103px;width:5px;height:1px;background:#000;"></div>
<div style="left:751px;top:184px;width:7px;height:7px;border:1px solid #808080;background:#fff"></div>
<div style="left:753px;top:188px;width:5px;height:1px;background:#000;"></div>
<div style="left:761px;top:103px;width:4px;height:1px;background:repeating-linear-gradient(90deg,#808080 0 1px,transparent 1px 2px)"></div>
<div style="left:761px;top:188px;width:4px;height:1px;background:repeating-linear-gradient(90deg,#808080 0 1px,transparent 1px 2px)"></div>
<div style="left:765px;top:90px;width:526px;height:26px;background:#666666;"></div>
<div class="t" style="left:768px;top:97px;font-weight:bold;font-size:12.5px;color:#d0d8ff;line-height:15px">Experiment</div>
<div style="left:775px;top:116px;width:1px;height:51px;background:repeating-linear-gradient(180deg,#808080 0 1px,transparent 1px 2px)"></div>
<div style="left:776px;top:126px;width:9px;height:1px;background:repeating-linear-gradient(90deg,#808080 0 1px,transparent 1px 2px)"></div>
<div style="left:776px;top:146px;width:9px;height:1px;background:repeating-linear-gradient(90deg,#808080 0 1px,transparent 1px 2px)"></div>
<div style="left:776px;top:166px;width:9px;height:1px;background:repeating-linear-gradient(90deg,#808080 0 1px,transparent 1px 2px)"></div>
<div style="left:785px;top:116px;width:109px;height:20px;background:#dcdbc8;"></div>
<div class="t" style="left:787px;top:121px;">Protocol</div>
<div class="t" style="left:787px;top:141px;">Laser Intensity</div>
<div class="t" style="left:787px;top:161px;letter-spacing:-0.3px">Pulse Duration</div>
<div style="left:894px;top:117px;width:373px;height:18px;background:#dcdbc8;"></div>
<div style="left:894px;top:117px;width:372px;height:17px;background:#404040;"></div>
<div style="left:894px;top:118px;width:1px;height:16px;background:#808080;"></div>
<div style="left:896px;top:118px;width:370px;height:16px;background:#fff;"></div>
<div class="t" style="left:898px;top:120px;">Lick</div>
<div style="left:1251px;top:118px;width:16px;height:16px;background:#404040;"></div>
<div style="left:1251px;top:118px;width:15px;height:15px;background:#fff;"></div>
<div style="left:1252px;top:119px;width:14px;height:14px;background:#808080;"></div>
<div style="left:1252px;top:119px;width:13px;height:13px;background:#dcdbc8;"></div>
<svg style="left:1255px;top:124px" width="7" height="4" viewBox="0 0 7 4"><path d="M0 0 H7 L3.5 4 Z" fill="#000"/></svg>
<div class="t" style="left:895px;top:140px;">3 V</div>
<div class="t" style="left:895px;top:160px;">1 s</div>
<div style="left:1271px;top:116px;width:20px;height:20px;background:#dcdbc8;"></div>
<div style="left:1271px;top:116px;width:1px;height:19px;background:#fff;"></div>
<div style="left:1271px;top:116px;width:19px;height:1px;background:#fff;"></div>
<div style="left:1271px;top:135px;width:20px;height:1px;background:#000;"></div>
<div style="left:1290px;top:116px;width:1px;height:20px;background:#404040;"></div>
<svg style="left:1272px;top:118px" width="18" height="16" viewBox="0 0 18 16"><defs><linearGradient id="yg" x1="0" y1="0" x2="1" y2="1"><stop offset="0" stop-color="#f8d000"/><stop offset="0.6" stop-color="#e8b000"/><stop offset="1" stop-color="#f0c868"/></linearGradient></defs><path d="M7 6 Q13.5 3.5 15.8 8 Q17 11.5 13.5 14.5" fill="none" stroke="url(#yg)" stroke-width="4.6"/><path d="M1 7 L8.5 1.5 L9 11.5 Z" fill="#f4c400"/></svg>
<div style="left:1271px;top:136px;width:20px;height:20px;background:#dcdbc8;"></div>
<div style="left:1271px;top:136px;width:1px;height:19px;background:#fff;"></div>
<div style="left:1271px;top:136px;width:19px;height:1px;background:#fff;"></div>
<div style="left:1271px;top:155px;width:20px;height:1px;background:#000;"></div>
<div style="left:1290px;top:136px;width:1px;height:20px;background:#404040;"></div>
<svg style="left:1272px;top:138px" width="18" height="16" viewBox="0 0 18 16"><path d="M6.5 6 Q13 3 15.5 8 Q16.5 11.5 13 14" fill="none" stroke="#c4bcc0" stroke-width="3.4"/><path d="M1 6.5 L8 1.5 V11 Z" fill="#c8c0c4"/><path d="M7 6.8 Q12.5 4.8 14.3 8.5 Q15 11 12.5 12.8" fill="none" stroke="#dcd8d0" stroke-width="1.2"/></svg>
<div style="left:1271px;top:156px;width:20px;height:20px;background:#dcdbc8;"></div>
<div style="left:1271px;top:156px;width:1px;height:19px;background:#fff;"></div>
<div style="left:1271px;top:156px;width:19px;height:1px;background:#fff;"></div>
<div style="left:1271px;top:175px;width:20px;height:1px;background:#000;"></div>
<div style="left:1290px;top:156px;width:1px;height:20px;background:#404040;"></div>
<svg style="left:1272px;top:158px" width="18" height="16" viewBox="0 0 18 16"><path d="M6.5 6 Q13 3 15.5 8 Q16.5 11.5 13 14" fill="none" stroke="#c4bcc0" stroke-width="3.4"/><path d="M1 6.5 L8 1.5 V11 Z" fill="#c8c0c4"/><path d="M7 6.8 Q12.5 4.8 14.3 8.5 Q15 11 12.5 12.8" fill="none" stroke="#dcd8d0" stroke-width="1.2"/></svg>
<div style="left:765px;top:176px;width:526px;height:25px;background:#666666;"></div>
<div class="t" style="left:768px;top:182px;font-weight:bold;font-size:12.5px;letter-spacing:0.3px;color:#d0d8ff;line-height:15px">Advanced</div>
<div style="left:775px;top:201px;width:1px;height:71px;background:repeating-linear-gradient(180deg,#808080 0 1px,transparent 1px 2px)"></div>
<div style="left:776px;top:211px;width:9px;height:1px;background:repeating-linear-gradient(90deg,#808080 0 1px,transparent 1px 2px)"></div>
<div style="left:776px;top:231px;width:9px;height:1px;background:repeating-linear-gradient(90deg,#808080 0 1px,transparent 1px 2px)"></div>
<div style="left:776px;top:251px;width:9px;height:1px;background:repeating-linear-gradient(90deg,#808080 0 1px,transparent 1px 2px)"></div>
<div style="left:776px;top:271px;width:9px;height:1px;background:repeating-linear-gradient(90deg,#808080 0 1px,transparent 1px 2px)"></div>
<div class="t" style="left:787px;top:206px;letter-spacing:-0.2px">Water Open Time</div>
<div class="t" style="left:787px;top:226px;letter-spacing:-0.38px">100 Reward Volume</div>
<div class="t" style="left:787px;top:246px;letter-spacing:-0.42px">Enable Lick Simulation</div>
<div class="t" style="left:787px;top:266px;letter-spacing:-0.3px">Histogram bin size</div>
<div class="t" style="left:895px;top:205px;">100 ms</div>
<div class="t" style="left:895px;top:225px;">10 ml</div>
<div style="left:894px;top:244px;width:12px;height:12px;background:#fff;"></div>
<div style="left:894px;top:244px;width:11px;height:11px;background:#808080;"></div>
<div style="left:895px;top:245px;width:10px;height:10px;background:#eeeee0;"></div>
<div style="left:895px;top:245px;width:9px;height:9px;background:#404040;"></div>
<div style="left:896px;top:246px;width:8px;height:8px;background:#fff;"></div>
<div class="t" style="left:895px;top:265px;">50 ms</div>
<div style="left:1271px;top:201px;width:20px;height:20px;background:#dcdbc8;"></div>
<div style="left:1271px;top:201px;width:1px;height:19px;background:#fff;"></div>
<div style="left:1271px;top:201px;width:19px;height:1px;background:#fff;"></div>
<div style="left:1271px;top:220px;width:20px;height:1px;background:#000;"></div>
<div style="left:1290px;top:201px;width:1px;height:20px;background:#404040;"></div>
<svg style="left:1272px;top:203px" width="18" height="16" viewBox="0 0 18 16"><path d="M6.5 6 Q13 3 15.5 8 Q16.5 11.5 13 14" fill="none" stroke="#c4bcc0" stroke-width="3.4"/><path d="M1 6.5 L8 1.5 V11 Z" fill="#c8c0c4"/><path d="M7 6.8 Q12.5 4.8 14.3 8.5 Q15 11 12.5 12.8" fill="none" stroke="#dcd8d0" stroke-width="1.2"/></svg>
<div style="left:1271px;top:221px;width:20px;height:20px;background:#dcdbc8;"></div>
<div style="left:1271px;top:221px;width:1px;height:19px;background:#fff;"></div>
<div style="left:1271px;top:221px;width:19px;height:1px;background:#fff;"></div>
<div style="left:1271px;top:240px;width:20px;height:1px;background:#000;"></div>
<div style="left:1290px;top:221px;width:1px;height:20px;background:#404040;"></div>
<svg style="left:1272px;top:223px" width="18" height="16" viewBox="0 0 18 16"><path d="M6.5 6 Q13 3 15.5 8 Q16.5 11.5 13 14" fill="none" stroke="#c4bcc0" stroke-width="3.4"/><path d="M1 6.5 L8 1.5 V11 Z" fill="#c8c0c4"/><path d="M7 6.8 Q12.5 4.8 14.3 8.5 Q15 11 12.5 12.8" fill="none" stroke="#dcd8d0" stroke-width="1.2"/></svg>
<div style="left:1271px;top:241px;width:20px;height:20px;background:#dcdbc8;"></div>
<div style="left:1271px;top:241px;width:1px;height:19px;background:#fff;"></div>
<div style="left:1271px;top:241px;width:19px;height:1px;background:#fff;"></div>
<div style="left:1271px;top:260px;width:20px;height:1px;background:#000;"></div>
<div style="left:1290px;top:241px;width:1px;height:20px;background:#404040;"></div>
<svg style="left:1272px;top:243px" width="18" height="16" viewBox="0 0 18 16"><path d="M6.5 6 Q13 3 15.5 8 Q16.5 11.5 13 14" fill="none" stroke="#c4bcc0" stroke-width="3.4"/><path d="M1 6.5 L8 1.5 V11 Z" fill="#c8c0c4"/><path d="M7 6.8 Q12.5 4.8 14.3 8.5 Q15 11 12.5 12.8" fill="none" stroke="#dcd8d0" stroke-width="1.2"/></svg>
<div style="left:1271px;top:261px;width:20px;height:20px;background:#dcdbc8;"></div>
<div style="left:1271px;top:261px;width:1px;height:19px;background:#fff;"></div>
<div style="left:1271px;top:261px;width:19px;height:1px;background:#fff;"></div>
<div style="left:1271px;top:280px;width:20px;height:1px;background:#000;"></div>
<div style="left:1290px;top:261px;width:1px;height:20px;background:#404040;"></div>
<svg style="left:1272px;top:263px" width="18" height="16" viewBox="0 0 18 16"><path d="M6.5 6 Q13 3 15.5 8 Q16.5 11.5 13 14" fill="none" stroke="#c4bcc0" stroke-width="3.4"/><path d="M1 6.5 L8 1.5 V11 Z" fill="#c8c0c4"/><path d="M7 6.8 Q12.5 4.8 14.3 8.5 Q15 11 12.5 12.8" fill="none" stroke="#dcd8d0" stroke-width="1.2"/></svg><div style="left:1px;top:464px;width:1293px;height:1px;background:#fff;"></div><div class="t" style="left:3px;top:468px;">Log/Debug</div><svg style="left:587px;top:468px" width="9" height="9" viewBox="0 0 9 9"><path d="M3 0.5 H8.5 V5.5 H6.5 M3 0.5 V3" fill="none" stroke="#000"/><path d="M3 1.5 H8" stroke="#000" stroke-width="1"/><rect x="0.5" y="3.5" width="5.5" height="5" fill="none" stroke="#000"/><path d="M1 4.5 H6" stroke="#000"/></svg><svg style="left:602px;top:469px" width="9" height="8" viewBox="0 0 9 8"><path d="M0.7 0.5 L8.3 7.5 M8.3 0.5 L0.7 7.5" stroke="#000" stroke-width="1.7"/></svg><div class="t" style="left:616px;top:468px;">Plots</div><svg style="left:1266px;top:468px" width="9" height="9" viewBox="0 0 9 9"><path d="M3 0.5 H8.5 V5.5 H6.5 M3 0.5 V3" fill="none" stroke="#000"/><path d="M3 1.5 H8" stroke="#000" stroke-width="1"/><rect x="0.5" y="3.5" width="5.5" height="5" fill="none" stroke="#000"/><path d="M1 4.5 H6" stroke="#000"/></svg><svg style="left:1281px;top:469px" width="9" height="8" viewBox="0 0 9 8"><path d="M0.7 0.5 L8.3 7.5 M8.3 0.5 L0.7 7.5" stroke="#000" stroke-width="1.7"/></svg><div style="left:1px;top:483px;width:1293px;height:1px;background:#808080;"></div><div style="left:1px;top:484px;width:613px;height:241px;background:#404040;"></div><div style="left:1px;top:484px;width:612px;height:240px;background:#fff;"></div><div style="left:2px;top:485px;width:611px;height:239px;background:#808080;"></div><div style="left:2px;top:485px;width:610px;height:238px;background:#dcdbc8;"></div><div style="left:3px;top:486px;width:609px;height:237px;background:#fff;"></div><div style="left:3px;top:486px;width:608px;height:236px;background:#808080;"></div><div style="left:4px;top:487px;width:607px;height:235px;background:#dcdbc8;"></div><div style="left:4px;top:487px;width:606px;height:234px;background:#404040;"></div><div style="left:5px;top:488px;width:605px;height:233px;background:#fff;"></div><div class="t" style="left:10px;top:488px;">2017-03-08 03:00:05,278 INFO</div><div class="t" style="left:169px;top:488px;">Copied c:\Data\log\log_behav_2017-03-06_18-26-44.txt to x:</div><div class="t" style="left:10px;top:501px;">\behavioral\log_behav_2017-03-06_18-26-44.txt (702467)</div><div class="t" style="left:10px;top:514px;">2017-03-08 03:00:05,286 INFO</div><div class="t" style="left:169px;top:514px;">Copied c:\Data\log\log_behav_2017-03-07_17-22-08.txt to x:</div><div class="t" style="left:10px;top:527px;">\behavioral\log_behav_2017-03-07_17-22-08.txt (605)</div><div class="t" style="left:10px;top:540px;">2017-03-08 03:00:05,286 INFO</div><div class="t" style="left:169px;top:540px;">Done</div><div class="t" style="left:10px;top:553px;">2017-03-08 03:00:05,286 INFO</div><div class="t" style="left:169px;top:553px;">Backing up data files</div><div class="t" style="left:10px;top:566px;">2017-03-08 03:05:38,755 INFO</div><div class="t" style="left:169px;top:566px;">Copied C:\Data\nelidash\2017\BL6\m11_redo\animal_m11_redo.hdf5 to x:</div><div class="t" style="left:10px;top:579px;">\behavioral\m11_redo\animal_m11_redo.hdf5 (4726)</div><div class="t" style="left:10px;top:592px;">2017-03-08 03:24:50,923 INFO</div><div class="t" style="left:169px;top:592px;">Done</div><div class="t" style="left:10px;top:605px;">2017-03-08 03:24:50,924 INFO</div><div class="t" style="left:169px;top:605px;">Done</div><div class="t" style="left:10px;top:618px;">2017-03-08 07:54:47,084 INFO</div><div class="t" style="left:169px;top:618px;">Result: HIT, lick numbers: {'postflash': 2, 'total': 2, 'postreward': 2}</div><div class="t" style="left:10px;top:631px;">2017-03-08 07:54:47,084 INFO</div><div class="t" style="left:169px;top:631px;">Protocol timing: [('lick_latency', 0.593), ('pretrial_duration', 13.012), ('stimulus_t',</div><div class="t" style="left:10px;top:644px;">array([ 14.6808,&nbsp; 14.8812])), ('stimulus duration', 0.20040000000000013), ('reward_delay', -0.092), ('drink_time',</div><div class="t" style="left:10px;top:657px;">2.001), ('lick_result', True), ('reward_latency', 0.091599999999999682)]</div><div class="t" style="left:10px;top:670px;">2017-03-08 07:54:47,085 INFO</div><div class="t" style="left:169px;top:670px;"></div><div class="t" style="left:10px;top:683px;">2017-03-08 07:54:47,089 INFO</div><div class="t" style="left:169px;top:683px;">Opened c:</div><div class="t" style="left:10px;top:696px;">\Data\nelidash\2017\BL6\m12_redo\20170305\data_Lick_201703052053289.hdf5</div><div style="left:594px;top:488px;width:16px;height:233px;background:repeating-conic-gradient(#fff 0 25%,#dcdbc8 0 50%) 0 0/2px 2px"></div><div style="left:594px;top:488px;width:16px;height:16px;background:#404040;"></div><div style="left:594px;top:488px;width:15px;height:15px;background:#fff;"></div><div style="left:595px;top:489px;width:14px;height:14px;background:#808080;"></div><div style="left:595px;top:489px;width:13px;height:13px;background:#dcdbc8;"></div><svg style="left:598px;top:494px" width="7" height="4" viewBox="0 0 7 4"><path d="M3.5 0 L7 4 H0 Z" fill="#000"/></svg><div style="left:594px;top:705px;width:16px;height:16px;background:#404040;"></div><div style="left:594px;top:705px;width:15px;height:15px;background:#fff;"></div><div style="left:595px;top:706px;width:14px;height:14px;background:#808080;"></div><div style="left:595px;top:706px;width:13px;height:13px;background:#dcdbc8;"></div><svg style="left:598px;top:711px" width="7" height="4" viewBox="0 0 7 4"><path d="M0 0 H7 L3.5 4 Z" fill="#000"/></svg><div style="left:594px;top:568px;width:16px;height:135px;background:#404040;"></div><div style="left:594px;top:568px;width:15px;height:134px;background:#fff;"></div><div style="left:595px;top:569px;width:14px;height:133px;background:#808080;"></div><div style="left:595px;top:569px;width:13px;height:132px;background:#dcdbc8;"></div><div style="left:41px;top:724px;width:1px;height:16px;background:#fff;"></div><div style="left:133px;top:724px;width:1px;height:16px;background:#404040;"></div><div style="left:132px;top:724px;width:1px;height:15px;background:#808080;"></div><div style="left:42px;top:740px;width:91px;height:1px;background:#404040;"></div><div style="left:42px;top:739px;width:90px;height:1px;background:#808080;"></div><div class="t" style="left:53px;top:726px;">Python Debug</div><div style="left:2px;top:723px;width:39px;height:20px;background:#dcdbc8;"></div><div style="left:2px;top:723px;width:1px;height:19px;background:#fff;"></div><div style="left:40px;top:724px;width:1px;height:18px;background:#404040;"></div><div style="left:39px;top:724px;width:1px;height:18px;background:#808080;"></div><div style="left:3px;top:742px;width:37px;height:1px;background:#404040;"></div><div style="left:3px;top:741px;width:36px;height:1px;background:#808080;"></div><div class="t" style="left:12px;top:728px;">Log</div><div style="left:614px;top:484px;width:679px;height:241px;background:#404040;"></div><div style="left:614px;top:484px;width:679px;height:240px;background:#fff;"></div><div style="left:615px;top:485px;width:678px;height:239px;background:#808080;"></div><div style="left:615px;top:485px;width:678px;height:238px;background:#dcdbc8;"></div><div style="left:616px;top:486px;width:677px;height:237px;background:#fff;"></div><svg style="left:616px;top:486px" width="677" height="237" viewBox="616 486 677 237" font-family="Liberation Sans, sans-serif">
<rect x="670" y="493" width="1" height="1" fill="#b0b0c0"/>
<text x="878.5" y="517" font-size="14" fill="#9a9a9a" textLength="221" lengthAdjust="spacingAndGlyphs">data_Lick_201703052053289.hdf5</text>
<path d="M679 637.5 H1293" stroke="#cfcfcf" stroke-width="1"/>
<path d="M679 610.5 H1293" stroke="#cfcfcf" stroke-width="1"/>
<path d="M679 582.5 H1293" stroke="#cfcfcf" stroke-width="1"/>
<path d="M679 555.5 H1293" stroke="#cfcfcf" stroke-width="1"/>
<path d="M679 527.5 H1293" stroke="#cfcfcf" stroke-width="1"/>
<path d="M767.5 526 V676" stroke="#cfcfcf" stroke-width="1"/>
<path d="M834.5 526 V676" stroke="#cfcfcf" stroke-width="1"/>
<path d="M900.5 526 V676" stroke="#cfcfcf" stroke-width="1"/>
<path d="M967.5 526 V676" stroke="#cfcfcf" stroke-width="1"/>
<path d="M1033.5 526 V676" stroke="#cfcfcf" stroke-width="1"/>
<path d="M1099.5 526 V676" stroke="#cfcfcf" stroke-width="1"/>
<path d="M1166.5 526 V676" stroke="#cfcfcf" stroke-width="1"/>
<path d="M1232.5 526 V676" stroke="#cfcfcf" stroke-width="1"/>
<path d="M679 665.5 H1293" stroke="#8a8a8a"/>
<path d="M701.5 526 V676" stroke="#8a8a8a"/>
<path d="M678.5 526 V676.5 H1293" fill="none" stroke="#8a8a8a"/>
<text x="672" y="669" font-size="11" fill="#999" text-anchor="end">0</text>
<text x="672" y="641" font-size="11" fill="#999" text-anchor="end">1</text>
<text x="672" y="614" font-size="11" fill="#999" text-anchor="end">2</text>
<text x="672" y="586" font-size="11" fill="#999" text-anchor="end">3</text>
<text x="672" y="559" font-size="11" fill="#999" text-anchor="end">4</text>
<text x="672" y="531" font-size="11" fill="#999" text-anchor="end">5</text>
<text x="701.0" y="688" font-size="11" fill="#999" text-anchor="middle">0</text>
<text x="767.4" y="688" font-size="11" fill="#999" text-anchor="middle">2</text>
<text x="833.8" y="688" font-size="11" fill="#999" text-anchor="middle">4</text>
<text x="900.1" y="688" font-size="11" fill="#999" text-anchor="middle">6</text>
<text x="966.5" y="688" font-size="11" fill="#999" text-anchor="middle">8</text>
<text x="1032.9" y="688" font-size="11" fill="#999" text-anchor="middle">10</text>
<text x="1099.3" y="688" font-size="11" fill="#999" text-anchor="middle">12</text>
<text x="1165.7" y="688" font-size="11" fill="#999" text-anchor="middle">14</text>
<text x="1232.0" y="688" font-size="11" fill="#999" text-anchor="middle">16</text>
<text x="967" y="711" font-size="12" fill="#999" textLength="39" lengthAdjust="spacingAndGlyphs">times [s]</text>
<text transform="translate(635.6 603) rotate(-90)" x="-28" y="0" font-size="11.5" fill="#999" textLength="56" lengthAdjust="spacingAndGlyphs">speed [m/s]</text>
<rect x="708" y="556" width="74" height="103" fill="#d9d9d9" fill-opacity="0.5"/>
<path d="M715 575.5 L727.5 563" stroke="#00e000" stroke-width="1"/>
<path d="M715 613.5 L727.5 601" stroke="#ff2020" stroke-width="1"/>
<path d="M714.5 632 L727.5 619.5" stroke="#2020ff" stroke-width="1"/>
<path d="M718 585 H724 L721 589.5 Z" fill="#60e060"/>
<path d="M718 641 H724 L721 645.5 Z" fill="#606060"/>
<text x="746.5" y="573" font-size="8" fill="#a0a0a0" text-anchor="middle">lick raw</text>
<text x="746.5" y="592" font-size="8" fill="#a0a0a0" text-anchor="middle">licks</text>
<text x="746.5" y="611" font-size="8" fill="#a0a0a0" text-anchor="middle">stimulus</text>
<text x="746.5" y="629" font-size="8" fill="#a0a0a0" text-anchor="middle">reward</text>
<text x="746.5" y="648" font-size="8" fill="#a0a0a0" text-anchor="middle">protocol/debug</text>
<path d="M752 633.5 H760.5 L756.2 641.5 Z" fill="#222"/>
<path d="M705 664 h1 v2 h-1 Z M706 663 h1 v2 h-1 Z M710 665 h1 v2 h-1 Z M711 663 h1 v2 h-1 Z M712 663 h1 v2 h-1 Z M713 665 h1 v2 h-1 Z M714 665 h1 v2 h-1 Z M715 664 h1 v2 h-1 Z M716 665 h1 v2 h-1 Z M717 665 h1 v2 h-1 Z M718 663 h1 v2 h-1 Z M719 663 h1 v2 h-1 Z M720 664 h1 v2 h-1 Z M721 664 h1 v2 h-1 Z M722 665 h1 v2 h-1 Z M723 666 h1 v2 h-1 Z M724 665 h1 v2 h-1 Z M725 664 h1 v2 h-1 Z M726 665 h1 v2 h-1 Z M727 665 h1 v2 h-1 Z M729 666 h1 v2 h-1 Z M730 664 h1 v2 h-1 Z M731 665 h1 v2 h-1 Z M732 664 h1 v2 h-1 Z M733 666 h1 v2 h-1 Z M734 663 h1 v2 h-1 Z M735 665 h1 v2 h-1 Z M736 664 h1 v2 h-1 Z M737 664 h1 v2 h-1 Z M738 663 h1 v2 h-1 Z M742 665 h1 v2 h-1 Z M743 666 h1 v2 h-1 Z M752 663 h1 v2 h-1 Z M753 665 h1 v2 h-1 Z M754 663 h1 v2 h-1 Z M763 665 h1 v2 h-1 Z M764 665 h1 v2 h-1 Z M766 664 h1 v2 h-1 Z M767 664 h1 v2 h-1 Z M768 665 h1 v2 h-1 Z M780 664 h1 v2 h-1 Z M781 666 h1 v2 h-1 Z M782 665 h1 v2 h-1 Z M783 664 h1 v2 h-1 Z M784 663 h1 v2 h-1 Z M785 665 h1 v2 h-1 Z M786 665 h1 v2 h-1 Z M787 664 h1 v2 h-1 Z M788 665 h1 v2 h-1 Z M789 666 h1 v2 h-1 Z M790 663 h1 v2 h-1 Z M791 666 h1 v2 h-1 Z M792 665 h1 v2 h-1 Z M793 665 h1 v2 h-1 Z M796 663 h1 v2 h-1 Z M797 665 h1 v2 h-1 Z M798 664 h1 v2 h-1 Z M799 663 h1 v2 h-1 Z M801 663 h1 v2 h-1 Z M802 665 h1 v2 h-1 Z M806 664 h1 v2 h-1 Z M807 665 h1 v2 h-1 Z M808 663 h1 v2 h-1 Z M814 666 h1 v2 h-1 Z M815 664 h1 v2 h-1 Z M816 666 h1 v2 h-1 Z M817 663 h1 v2 h-1 Z M818 665 h1 v2 h-1 Z M819 666 h1 v2 h-1 Z M820 663 h1 v2 h-1 Z M821 664 h1 v2 h-1 Z M822 663 h1 v2 h-1 Z M823 664 h1 v2 h-1 Z M824 664 h1 v2 h-1 Z M825 664 h1 v2 h-1 Z M826 665 h1 v2 h-1 Z M827 664 h1 v2 h-1 Z M828 664 h1 v2 h-1 Z M829 665 h1 v2 h-1 Z M830 664 h1 v2 h-1 Z M831 665 h1 v2 h-1 Z M832 663 h1 v2 h-1 Z M833 664 h1 v2 h-1 Z M834 664 h1 v2 h-1 Z M835 664 h1 v2 h-1 Z M836 666 h1 v2 h-1 Z M837 664 h1 v2 h-1 Z M839 665 h1 v2 h-1 Z M840 664 h1 v2 h-1 Z M841 665 h1 v2 h-1 Z M842 665 h1 v2 h-1 Z M843 664 h1 v2 h-1 Z M844 663 h1 v2 h-1 Z M845 663 h1 v2 h-1 Z M846 666 h1 v2 h-1 Z M847 665 h1 v2 h-1 Z M848 665 h1 v2 h-1 Z M849 664 h1 v2 h-1 Z M855 664 h1 v2 h-1 Z M856 664 h1 v2 h-1 Z M865 665 h1 v2 h-1 Z M866 663 h1 v2 h-1 Z M867 666 h1 v2 h-1 Z M868 665 h1 v2 h-1 Z M869 664 h1 v2 h-1 Z M870 664 h1 v2 h-1 Z M871 664 h1 v2 h-1 Z M873 665 h1 v2 h-1 Z M874 665 h1 v2 h-1 Z M875 665 h1 v2 h-1 Z M876 664 h1 v2 h-1 Z M885 664 h1 v2 h-1 Z M886 663 h1 v2 h-1 Z M887 664 h1 v2 h-1 Z M888 664 h1 v2 h-1 Z M889 665 h1 v2 h-1 Z M890 663 h1 v2 h-1 Z M891 664 h1 v2 h-1 Z M892 665 h1 v2 h-1 Z M893 663 h1 v2 h-1 Z M894 663 h1 v2 h-1 Z M895 664 h1 v2 h-1 Z M897 665 h1 v2 h-1 Z M898 663 h1 v2 h-1 Z M899 665 h1 v2 h-1 Z M900 665 h1 v2 h-1 Z M901 666 h1 v2 h-1 Z M902 665 h1 v2 h-1 Z M903 665 h1 v2 h-1 Z M904 664 h1 v2 h-1 Z M905 664 h1 v2 h-1 Z M906 664 h1 v2 h-1 Z M907 664 h1 v2 h-1 Z M908 665 h1 v2 h-1 Z M909 663 h1 v2 h-1 Z M910 665 h1 v2 h-1 Z M915 666 h1 v2 h-1 Z M916 664 h1 v2 h-1 Z M917 664 h1 v2 h-1 Z M918 664 h1 v2 h-1 Z M919 663 h1 v2 h-1 Z M920 665 h1 v2 h-1 Z M921 666 h1 v2 h-1 Z M922 664 h1 v2 h-1 Z M923 665 h1 v2 h-1 Z M924 665 h1 v2 h-1 Z M925 664 h1 v2 h-1 Z M935 664 h1 v2 h-1 Z M936 663 h1 v2 h-1 Z M940 664 h1 v2 h-1 Z M941 666 h1 v2 h-1 Z M942 664 h1 v2 h-1 Z M943 665 h1 v2 h-1 Z M944 665 h1 v2 h-1 Z M945 664 h1 v2 h-1 Z M947 666 h1 v2 h-1 Z M948 663 h1 v2 h-1 Z M949 663 h1 v2 h-1 Z M950 664 h1 v2 h-1 Z M953 663 h1 v2 h-1 Z M954 664 h1 v2 h-1 Z M955 665 h1 v2 h-1 Z M956 664 h1 v2 h-1 Z M957 663 h1 v2 h-1 Z M958 664 h1 v2 h-1 Z M959 664 h1 v2 h-1 Z M960 664 h1 v2 h-1 Z M961 664 h1 v2 h-1 Z M962 665 h1 v2 h-1 Z M963 664 h1 v2 h-1 Z M964 666 h1 v2 h-1 Z M965 664 h1 v2 h-1 Z M966 664 h1 v2 h-1 Z M968 665 h1 v2 h-1 Z M969 664 h1 v2 h-1 Z M970 664 h1 v2 h-1 Z M971 663 h1 v2 h-1 Z M972 666 h1 v2 h-1 Z M973 665 h1 v2 h-1 Z M974 665 h1 v2 h-1 Z M975 664 h1 v2 h-1 Z M976 664 h1 v2 h-1 Z M977 666 h1 v2 h-1 Z M978 664 h1 v2 h-1 Z M979 664 h1 v2 h-1 Z M980 664 h1 v2 h-1 Z M985 666 h1 v2 h-1 Z M986 665 h1 v2 h-1 Z M987 664 h1 v2 h-1 Z M988 666 h1 v2 h-1 Z M989 665 h1 v2 h-1 Z M990 664 h1 v2 h-1 Z M991 664 h1 v2 h-1 Z M992 664 h1 v2 h-1 Z M993 665 h1 v2 h-1 Z M994 663 h1 v2 h-1 Z M995 664 h1 v2 h-1 Z M996 664 h1 v2 h-1 Z M1001 665 h1 v2 h-1 Z M1002 663 h1 v2 h-1 Z M1003 663 h1 v2 h-1 Z M1004 665 h1 v2 h-1 Z M1006 664 h1 v2 h-1 Z M1007 663 h1 v2 h-1 Z M1008 665 h1 v2 h-1 Z M1009 664 h1 v2 h-1 Z M1010 666 h1 v2 h-1 Z M1011 665 h1 v2 h-1 Z M1012 664 h1 v2 h-1 Z M1013 665 h1 v2 h-1 Z M1014 666 h1 v2 h-1 Z M1015 664 h1 v2 h-1 Z M1022 665 h1 v2 h-1 Z M1023 665 h1 v2 h-1 Z M1024 663 h1 v2 h-1 Z M1025 665 h1 v2 h-1 Z M1026 666 h1 v2 h-1 Z M1027 666 h1 v2 h-1 Z M1028 663 h1 v2 h-1 Z M1030 664 h1 v2 h-1 Z M1031 665 h1 v2 h-1 Z M1032 665 h1 v2 h-1 Z M1034 665 h1 v2 h-1 Z M1035 665 h1 v2 h-1 Z M1036 665 h1 v2 h-1 Z M1037 666 h1 v2 h-1 Z M1038 665 h1 v2 h-1 Z M1045 664 h1 v2 h-1 Z M1046 666 h1 v2 h-1 Z M1047 665 h1 v2 h-1 Z M1048 663 h1 v2 h-1 Z M1049 666 h1 v2 h-1 Z M1050 663 h1 v2 h-1 Z M1051 666 h1 v2 h-1 Z M1052 665 h1 v2 h-1 Z M1053 664 h1 v2 h-1 Z M1054 666 h1 v2 h-1 Z M1055 665 h1 v2 h-1 Z M1056 665 h1 v2 h-1 Z M1066 665 h1 v2 h-1 Z M1067 663 h1 v2 h-1 Z M1068 663 h1 v2 h-1 Z M1069 663 h1 v2 h-1 Z M1070 665 h1 v2 h-1 Z M1071 665 h1 v2 h-1 Z M1072 664 h1 v2 h-1 Z M1074 666 h1 v2 h-1 Z M1075 664 h1 v2 h-1 Z M1076 666 h1 v2 h-1 Z M1077 663 h1 v2 h-1 Z M1078 664 h1 v2 h-1 Z M1079 665 h1 v2 h-1 Z M1080 664 h1 v2 h-1 Z M1085 664 h1 v2 h-1 Z M1086 663 h1 v2 h-1 Z M1087 663 h1 v2 h-1 Z M1088 664 h1 v2 h-1 Z M1089 663 h1 v2 h-1 Z M1090 664 h1 v2 h-1 Z M1091 666 h1 v2 h-1 Z M1092 664 h1 v2 h-1 Z M1096 665 h1 v2 h-1 Z M1097 663 h1 v2 h-1 Z M1098 663 h1 v2 h-1 Z M1099 664 h1 v2 h-1 Z M1100 664 h1 v2 h-1 Z M1101 664 h1 v2 h-1 Z M1102 664 h1 v2 h-1 Z M1103 664 h1 v2 h-1 Z M1104 665 h1 v2 h-1 Z M1105 666 h1 v2 h-1 Z M1106 665 h1 v2 h-1 Z M1107 666 h1 v2 h-1 Z M1112 664 h1 v2 h-1 Z M1113 665 h1 v2 h-1 Z M1114 665 h1 v2 h-1 Z M1115 664 h1 v2 h-1 Z M1116 666 h1 v2 h-1 Z M1117 666 h1 v2 h-1 Z M1118 666 h1 v2 h-1 Z M1119 665 h1 v2 h-1 Z M1120 665 h1 v2 h-1 Z M1123 665 h1 v2 h-1 Z M1124 665 h1 v2 h-1 Z M1125 665 h1 v2 h-1 Z M1126 665 h1 v2 h-1 Z M1127 665 h1 v2 h-1 Z M1128 663 h1 v2 h-1 Z M1129 665 h1 v2 h-1 Z M1131 664 h1 v2 h-1 Z M1132 664 h1 v2 h-1 Z M1133 666 h1 v2 h-1 Z M1134 665 h1 v2 h-1 Z M1135 665 h1 v2 h-1 Z M1136 664 h1 v2 h-1 Z M1137 663 h1 v2 h-1 Z M1138 665 h1 v2 h-1 Z M1139 664 h1 v2 h-1 Z M1140 665 h1 v2 h-1 Z M1141 664 h1 v2 h-1 Z M1150 665 h1 v2 h-1 Z M1151 665 h1 v2 h-1 Z M1152 665 h1 v2 h-1 Z M1159 663 h1 v2 h-1 Z M1160 664 h1 v2 h-1 Z M1161 666 h1 v2 h-1 Z M1167 663 h1 v2 h-1 Z M1169 665 h1 v2 h-1 Z M1170 666 h1 v2 h-1 Z M1171 664 h1 v2 h-1 Z M1172 665 h1 v2 h-1 Z M1173 666 h1 v2 h-1 Z M1174 663 h1 v2 h-1 Z M1179 665 h1 v2 h-1 Z M1186 665 h1 v2 h-1 Z M1187 664 h1 v2 h-1 Z M1191 664 h1 v2 h-1 Z M1192 666 h1 v2 h-1 Z M1193 663 h1 v2 h-1 Z M1194 666 h1 v2 h-1 Z M1195 664 h1 v2 h-1 Z M1196 663 h1 v2 h-1 Z M1197 666 h1 v2 h-1 Z M1198 666 h1 v2 h-1 Z M1199 663 h1 v2 h-1 Z M1200 666 h1 v2 h-1 Z M1201 663 h1 v2 h-1 Z M1202 664 h1 v2 h-1 Z M1203 664 h1 v2 h-1 Z M1204 664 h1 v2 h-1 Z M1205 664 h1 v2 h-1 Z M1206 665 h1 v2 h-1 Z M1207 664 h1 v2 h-1 Z M1208 665 h1 v2 h-1 Z M1209 666 h1 v2 h-1 Z M1210 665 h1 v2 h-1 Z M1211 665 h1 v2 h-1 Z M1212 663 h1 v2 h-1 Z M1213 664 h1 v2 h-1 Z M1214 666 h1 v2 h-1 Z M1215 665 h1 v2 h-1 Z M1216 666 h1 v2 h-1 Z M1217 666 h1 v2 h-1 Z M1218 663 h1 v2 h-1 Z M1219 664 h1 v2 h-1 Z M1220 666 h1 v2 h-1 Z M1221 666 h1 v2 h-1 Z M1222 664 h1 v2 h-1 Z M1223 665 h1 v2 h-1 Z M1224 664 h1 v2 h-1 Z M1225 663 h1 v2 h-1 Z M1226 664 h1 v2 h-1 Z M1227 665 h1 v2 h-1 Z M1228 663 h1 v2 h-1 Z M1229 664 h1 v2 h-1 Z M1230 664 h1 v2 h-1 Z M1231 665 h1 v2 h-1 Z M1232 666 h1 v2 h-1 Z M1233 664 h1 v2 h-1 Z M1234 665 h1 v2 h-1 Z M1235 664 h1 v2 h-1 Z M1236 665 h1 v2 h-1 Z M1237 665 h1 v2 h-1 Z M1238 666 h1 v2 h-1 Z M1239 663 h1 v2 h-1 Z M1240 665 h1 v2 h-1 Z M1241 663 h1 v2 h-1 Z M1242 666 h1 v2 h-1 Z M1243 665 h1 v2 h-1 Z M1244 664 h1 v2 h-1 Z M1245 665 h1 v2 h-1 Z M1246 666 h1 v2 h-1 Z M1247 664 h1 v2 h-1 Z M1248 664 h1 v2 h-1 Z M1249 665 h1 v2 h-1 Z M1250 666 h1 v2 h-1 Z M1251 663 h1 v2 h-1 Z M1252 664 h1 v2 h-1 Z M1253 666 h1 v2 h-1 Z M1254 665 h1 v2 h-1 Z M1255 665 h1 v2 h-1 Z M1256 664 h1 v2 h-1 Z M1257 664 h1 v2 h-1 Z M1258 666 h1 v2 h-1 Z M1259 666 h1 v2 h-1 Z M1260 665 h1 v2 h-1 Z M1261 664 h1 v2 h-1 Z M1262 665 h1 v2 h-1 Z M1263 664 h1 v2 h-1 Z M1264 664 h1 v2 h-1 Z M1265 663 h1 v2 h-1 Z M1266 665 h1 v2 h-1 Z M1267 664 h1 v2 h-1 Z M1268 665 h1 v2 h-1 Z M1269 663 h1 v2 h-1 Z M1270 663 h1 v2 h-1 Z M1271 665 h1 v2 h-1 Z M1272 666 h1 v2 h-1 Z M1273 664 h1 v2 h-1 Z M1274 665 h1 v2 h-1 Z M1275 666 h1 v2 h-1 Z M1276 665 h1 v2 h-1 Z M1277 666 h1 v2 h-1 Z M1278 664 h1 v2 h-1 Z M1207 657 h1 V665 h-1 Z M1208 658 h1 V665 h-1 Z M1209 660 h1 V665 h-1 Z M1215 653 h1 V665 h-1 Z M1216 654 h1 V665 h-1 Z M1217 656 h1 V665 h-1 Z M1224 657 h1 V665 h-1 Z M1229 656 h1 V665 h-1 Z M1233 656 h1 V665 h-1 Z M1238 656 h1 V665 h-1 Z M1239 657 h1 V665 h-1 Z M1243 658 h1 V665 h-1 Z M1248 658 h1 V665 h-1 Z M1253 660 h1 V665 h-1 Z M1262 658 h1 V665 h-1 Z M1278 656 h1 V665 h-1 Z M1279 658 h1 V665 h-1 Z" fill="#00ee00" shape-rendering="crispEdges"/>
<rect x="701" y="665" width="578" height="1" fill="#0000ff" shape-rendering="crispEdges"/>
<path d="M742 665 h1 v1 h-1 Z M748 665 h1 v1 h-1 Z M750 665 h1 v1 h-1 Z M767 665 h1 v1 h-1 Z M771 665 h1 v1 h-1 Z M786 665 h1 v1 h-1 Z M895 665 h1 v1 h-1 Z M950 665 h1 v1 h-1 Z M1050 665 h1 v1 h-1 Z M1110 665 h1 v1 h-1 Z M1155 665 h1 v1 h-1 Z M1200 665 h1 v1 h-1 Z M1255 665 h1 v1 h-1 Z M1274 665 h1 v1 h-1 Z" fill="#ff0000" shape-rendering="crispEdges"/>
<rect x="1205" y="665" width="6" height="1" fill="#ff0000"/>
<path d="M1188.5 665 V583.5 H1192 M1193.5 583.5 H1195.5 V665" fill="none" stroke="#ff0000" stroke-width="1.3"/>
<path d="M1205.5 665 V537.5 H1208.5 M1211.5 537.5 V665" fill="none" stroke="#0000ff" stroke-width="1.3"/>
<path d="M1205 540 L1208.5 536 L1209.5 538.5 Z" fill="#0000ff"/>
<path d="M1211 537.5 h1.5" stroke="#0000ff" stroke-width="1"/>
<path d="M665 680 l2 1.5 l2 -1.5" fill="none" stroke="#aaa" stroke-width="1"/>
<path d="M1203.2 605.5 H1211.2 L1207.2 613 Z" fill="#70ee70"/>
<path d="M1212.7 605.5 H1220.7 L1216.7 613 Z" fill="#70ee70"/>
<path d="M1184.7 633.5 H1192.7 L1188.7 641 Z" fill="#3a3a3a" fill-opacity="0.85"/>
<path d="M1190.6 633.5 H1198.6 L1194.6 641 Z" fill="#3a3a3a" fill-opacity="0.85"/>
<path d="M1200.7 633.5 H1208.7 L1204.7 641 Z" fill="#3a3a3a" fill-opacity="0.85"/>
<path d="M1273.4 633.5 H1281.4 L1277.4 641 Z" fill="#1a1a1a" fill-opacity="0.85"/>
</svg><div style="left:670px;top:724px;width:1px;height:16px;background:#fff;"></div><div style="left:761px;top:724px;width:1px;height:16px;background:#404040;"></div><div style="left:760px;top:724px;width:1px;height:15px;background:#808080;"></div><div style="left:671px;top:740px;width:90px;height:1px;background:#404040;"></div><div style="left:671px;top:739px;width:89px;height:1px;background:#808080;"></div><div class="t" style="left:683px;top:726px;">animal_weight</div><div style="left:615px;top:723px;width:55px;height:20px;background:#dcdbc8;"></div><div style="left:615px;top:723px;width:1px;height:19px;background:#fff;"></div><div style="left:669px;top:724px;width:1px;height:18px;background:#404040;"></div><div style="left:668px;top:724px;width:1px;height:18px;background:#808080;"></div><div style="left:616px;top:742px;width:53px;height:1px;background:#404040;"></div><div style="left:616px;top:741px;width:52px;height:1px;background:#808080;"></div><div class="t" style="left:625px;top:728px;">events</div>
</body></html>
